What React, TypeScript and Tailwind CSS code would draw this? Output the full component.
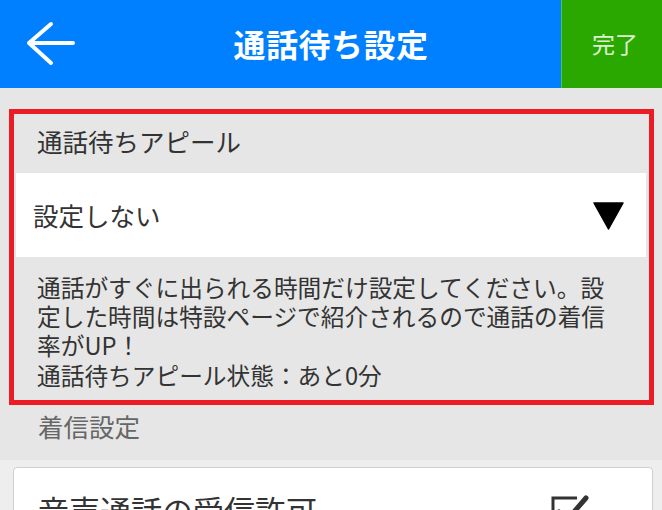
import React from "react";

const font = { fontFamily: '"Noto Sans CJK JP", "Noto Sans", sans-serif' };

export default function App() {
  return (
    <div
      className="w-[662px] h-[510px] overflow-hidden bg-[#e6e6e6] flex flex-col"
      style={font}
    >
      {/* Header */}
      <div className="h-[88px] flex bg-[#0080ff] shrink-0">
        <div className="w-[101px] flex items-center pl-[26px]">
          <svg width="50" height="46" viewBox="0 0 50 46" fill="none">
            <path
              d="M2 20 H46 M2 20 L24 1 M2 20 L24 40"
              stroke="white"
              strokeWidth="4"
              strokeLinecap="round"
              strokeLinejoin="round"
              transform="translate(1 2)"
            />
          </svg>
        </div>
        <div className="flex-1 flex items-center justify-center pb-[2px]">
          <span className="text-[32px] font-bold text-white leading-none tracking-[0.5px]">
            通話待ち設定
          </span>
        </div>
        <div className="w-[101px] bg-[#2ba800] border-l border-[#55c040] flex items-center justify-center pl-[6px] pb-[2px]">
          <span className="text-[23px] text-[#dcf2d4] leading-none">完了</span>
        </div>
      </div>

      {/* Red boxed section */}
      <div className="pt-[21px] pl-[9px] pr-[8px]">
        <div className="border-[5px] border-[#ec1c24]">
          <div className="h-[59px] flex items-center pl-[23px] pb-[6px]">
            <span className="text-[25.5px] text-[#333] leading-none">
              通話待ちアピール
            </span>
          </div>
          <div className="h-[84px] bg-white ml-[2px] mr-[3px] flex items-center justify-between pl-[17px] pr-[22px]">
            <span className="text-[25.5px] text-[#333] leading-none">設定しない</span>
            <svg width="31" height="28" viewBox="0 0 31 28" className="mt-[2px]">
              <path d="M1 1 H30 L15.5 27 Z" fill="black" stroke="black" strokeWidth="1.5" strokeLinejoin="round" />
            </svg>
          </div>
          <div className="pl-[23px] pr-[22px] pt-[16px] pb-[10px] text-[23.7px] leading-[29.2px] text-[#333]">
            <p>
              通話がすぐに出られる時間だけ設定してください。設定した時間は特設ページで紹介されるので通話の着信率がUP！
            </p>
            <p>通話待ちアピール状態：あと0分</p>
          </div>
        </div>
      </div>

      {/* 着信設定 */}
      <div className="h-[55px] shrink-0 pl-[38px] pt-[8px]">
        <span className="text-[25.5px] text-[#666] leading-none">着信設定</span>
      </div>

      {/* lower area */}
      <div className="flex-1 bg-[#eeeeee] pt-[7px] pl-[13px] pr-[9px]">
        <div className="bg-white border-[1.5px] border-[#cfcfcf] rounded-[4px] h-[120px] flex justify-between pl-[24px] pr-[62px] pt-[26px]">
          <span className="text-[31px] text-[#333] leading-none">音声通話の受信許可</span>
          <svg width="40" height="40" viewBox="0 0 40 40" className="-mt-[2px]">
            <path
              d="M27 6 H3 V34 H31 V18"
              fill="none"
              stroke="#333"
              strokeWidth="3"
            />
            <path
              d="M9 20 L17 28 L36 6"
              fill="none"
              stroke="#333"
              strokeWidth="5"
              strokeLinecap="round"
              strokeLinejoin="round"
            />
          </svg>
        </div>
      </div>
    </div>
  );
}
